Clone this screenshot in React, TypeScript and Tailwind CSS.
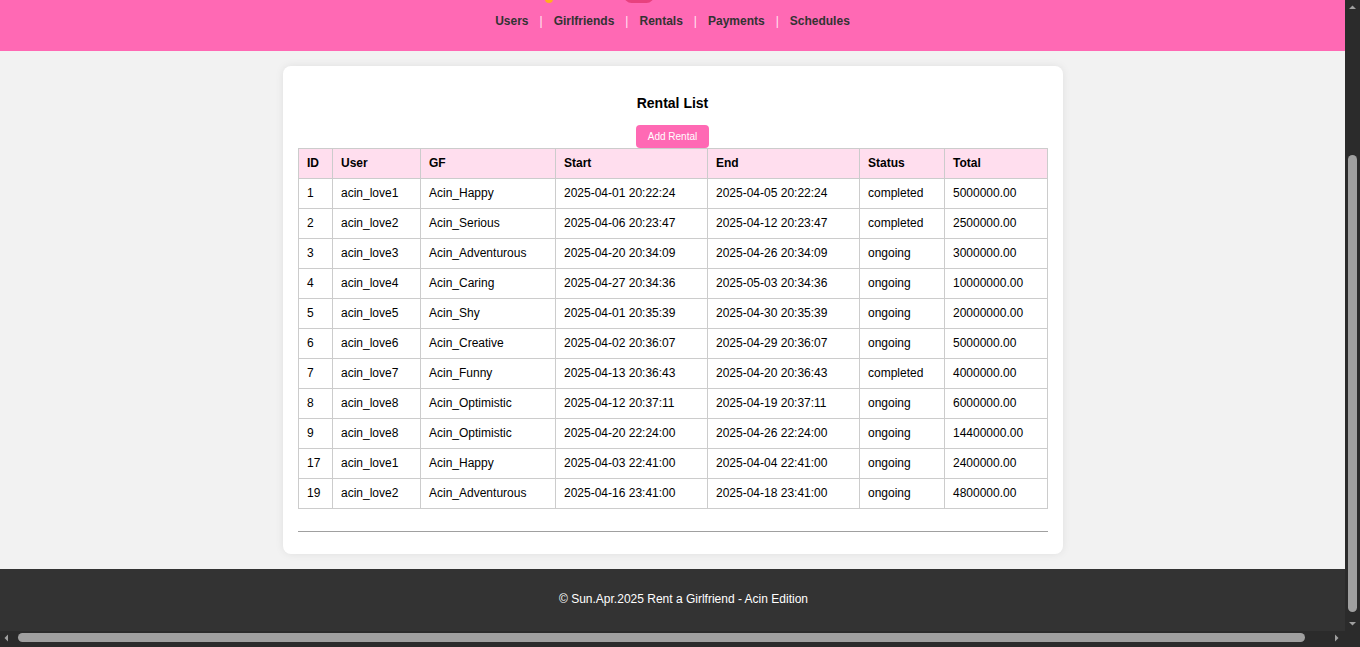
const rentals = [
  { id: 1, user: "acin_love1", gf: "Acin_Happy", start: "2025-04-01 20:22:24", end: "2025-04-05 20:22:24", status: "completed", total: "5000000.00" },
  { id: 2, user: "acin_love2", gf: "Acin_Serious", start: "2025-04-06 20:23:47", end: "2025-04-12 20:23:47", status: "completed", total: "2500000.00" },
  { id: 3, user: "acin_love3", gf: "Acin_Adventurous", start: "2025-04-20 20:34:09", end: "2025-04-26 20:34:09", status: "ongoing", total: "3000000.00" },
  { id: 4, user: "acin_love4", gf: "Acin_Caring", start: "2025-04-27 20:34:36", end: "2025-05-03 20:34:36", status: "ongoing", total: "10000000.00" },
  { id: 5, user: "acin_love5", gf: "Acin_Shy", start: "2025-04-01 20:35:39", end: "2025-04-30 20:35:39", status: "ongoing", total: "20000000.00" },
  { id: 6, user: "acin_love6", gf: "Acin_Creative", start: "2025-04-02 20:36:07", end: "2025-04-29 20:36:07", status: "ongoing", total: "5000000.00" },
  { id: 7, user: "acin_love7", gf: "Acin_Funny", start: "2025-04-13 20:36:43", end: "2025-04-20 20:36:43", status: "completed", total: "4000000.00" },
  { id: 8, user: "acin_love8", gf: "Acin_Optimistic", start: "2025-04-12 20:37:11", end: "2025-04-19 20:37:11", status: "ongoing", total: "6000000.00" },
  { id: 9, user: "acin_love8", gf: "Acin_Optimistic", start: "2025-04-20 22:24:00", end: "2025-04-26 22:24:00", status: "ongoing", total: "14400000.00" },
  { id: 17, user: "acin_love1", gf: "Acin_Happy", start: "2025-04-03 22:41:00", end: "2025-04-04 22:41:00", status: "ongoing", total: "2400000.00" },
  { id: 19, user: "acin_love2", gf: "Acin_Adventurous", start: "2025-04-16 23:41:00", end: "2025-04-18 23:41:00", status: "ongoing", total: "4800000.00" },
];

const navLinks = ["Users", "Girlfriends", "Rentals", "Payments", "Schedules"];

const cell = "h-[30px] border border-[#cccccc] px-[8px] pb-[1px] text-left align-middle";

export default function App() {
  return (
    <div className="w-[1360px] h-[647px] overflow-hidden flex flex-col bg-[#2b2b2b] text-[12px] font-['Liberation_Sans',Arial,sans-serif]">
      <div className="flex flex-row h-[631px]">
        <div className="w-[1345px] flex flex-col bg-[#f2f2f2]">
          {/* header, scrolled so only the bottom of the logo shows */}
          <header className="relative h-[51px] bg-[#ff69b4] flex justify-center items-start pt-[12px]">
            <span className="absolute left-[545px] top-[-6px] w-[8px] h-[9px] rounded-full bg-[#ffb11b]" />
            <span className="absolute left-[624px] top-[-12px] w-[30px] h-[15px] rounded-full bg-[#e8417f]" />
            <nav className="flex items-center gap-[11px] text-[12px] leading-[18px] font-bold text-[#333333]">
              {navLinks.map((l, i) => (
                <div key={l} className="flex items-center gap-[11px]">
                  {i > 0 && <span className="text-[#ffe6f2] font-normal">|</span>}
                  <a className="cursor-pointer">{l}</a>
                </div>
              ))}
            </nav>
          </header>

          <main className="flex justify-center pt-[15px] pb-[15px]">
            <div className="w-[780px] bg-white rounded-[8px] shadow-[0_0_8px_rgba(0,0,0,0.08)] px-[15px] pt-[29px] pb-[22px] flex flex-col items-center">
              <h3 className="text-[14px] leading-[17px] font-bold text-black">Rental List</h3>
              <button className="mt-[13px] h-[23px] w-[73px] rounded-[4px] bg-[#ff69b4] text-white text-[10px]">
                Add Rental
              </button>
              <table className="w-[749px] ml-[1px] border-collapse text-black table-fixed">
                <colgroup>
                  <col className="w-[34px]" />
                  <col className="w-[88px]" />
                  <col className="w-[135px]" />
                  <col className="w-[152px]" />
                  <col className="w-[152px]" />
                  <col className="w-[85px]" />
                  <col className="w-[103px]" />
                </colgroup>
                <thead>
                  <tr className="bg-[#ffdeee]">
                    {["ID", "User", "GF", "Start", "End", "Status", "Total"].map((h) => (
                      <th key={h} className={`${cell} font-bold`}>{h}</th>
                    ))}
                  </tr>
                </thead>
                <tbody>
                  {rentals.map((r) => (
                    <tr key={r.id}>
                      <td className={cell}>{r.id}</td>
                      <td className={cell}>{r.user}</td>
                      <td className={cell}>{r.gf}</td>
                      <td className={cell}>{r.start}</td>
                      <td className={cell}>{r.end}</td>
                      <td className={cell}>{r.status}</td>
                      <td className={cell}>{r.total}</td>
                    </tr>
                  ))}
                </tbody>
              </table>
              <hr className="mt-[22px] w-[750px] border-t border-[#a0a0a0]" />
            </div>
          </main>

          <footer className="flex-1 bg-[#333333] text-white text-center pt-[21px] pl-[22px]">
            © Sun.Apr.2025 Rent a Girlfriend - Acin Edition
          </footer>
        </div>

        {/* vertical scrollbar */}
        <div className="w-[15px] bg-[#2b2b2b] flex flex-col items-center">
          <svg width="15" height="15" viewBox="0 0 15 15"><path d="M4 9 L7.5 5.5 L11 9 Z" fill="#a0a0a0" /></svg>
          <div className="mt-[140px] w-[9px] h-[457px] rounded-full bg-[#a0a0a0]" />
          <div className="flex-1" />
          <svg width="15" height="15" viewBox="0 0 15 15"><path d="M4 6 L7.5 9.5 L11 6 Z" fill="#a0a0a0" /></svg>
        </div>
      </div>

      {/* horizontal scrollbar */}
      <div className="h-[16px] flex flex-row bg-[#2b2b2b]">
        <div className="w-[1345px] flex items-start pt-[2px]">
          <svg width="15" height="11" viewBox="0 0 15 11"><path d="M8 1.5 L4.5 5 L8 8.5 Z" fill="#a0a0a0" /></svg>
          <div className="ml-[3px] w-[1287px] h-[9px] rounded-full bg-[#a0a0a0]" />
          <div className="flex-1" />
          <svg width="15" height="11" viewBox="0 0 15 11"><path d="M5 1.5 L8.5 5 L5 8.5 Z" fill="#a0a0a0" /></svg>
        </div>
        <div className="w-[15px] bg-[#2b2b2b]" />
      </div>
    </div>
  );
}
